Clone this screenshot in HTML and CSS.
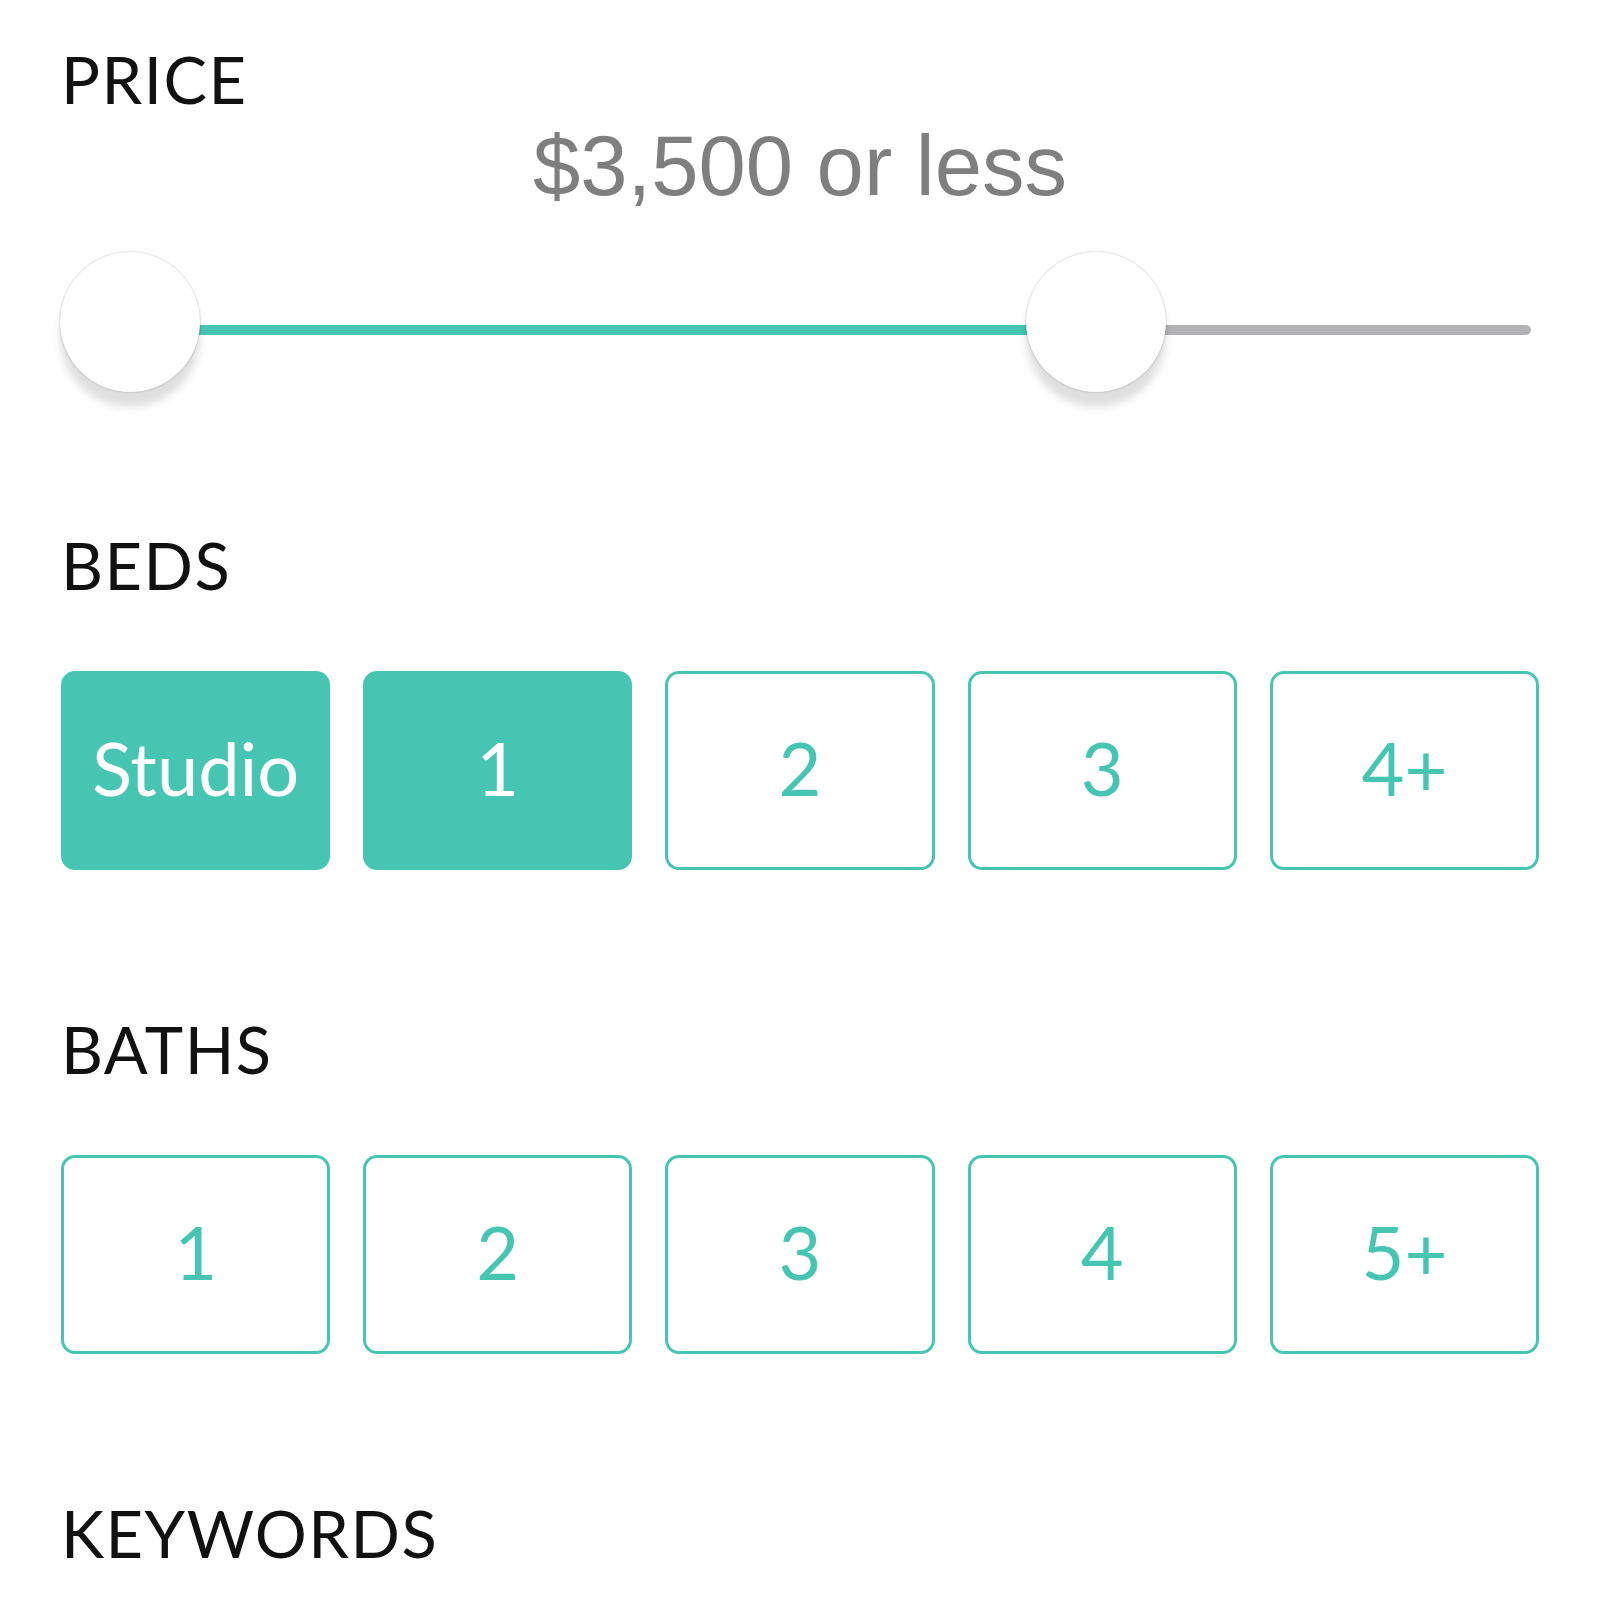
FILE: index.html
```html
<!DOCTYPE html>
<html lang="en">
<head>
  <meta charset="UTF-8" />
  <meta name="viewport" content="width=device-width, initial-scale=1.0" />
  <title>Filters</title>
  <link rel="stylesheet" href="styles.css">
</head>
<body>
  <div class="filters">
    <h2 class="label first">PRICE</h2>
    <div class="price-value">$3,500 or less</div>
    <div class="slider">
      <div class="track">
        <div class="fill"></div>
      </div>
      <div class="thumb min"></div>
      <div class="thumb max"></div>
    </div>

    <h2 class="label">BEDS</h2>
    <div class="options">
      <button class="opt selected">Studio</button>
      <button class="opt selected">1</button>
      <button class="opt">2</button>
      <button class="opt">3</button>
      <button class="opt">4+</button>
    </div>

    <h2 class="label">BATHS</h2>
    <div class="options">
      <button class="opt">1</button>
      <button class="opt">2</button>
      <button class="opt">3</button>
      <button class="opt">4</button>
      <button class="opt">5+</button>
    </div>

    <h2 class="label">KEYWORDS</h2>
  </div>
</body>
</html>
```

FILE: styles.css
```css
body {
  margin: 0;
  background: #ffffff;
  font-family: Lato, "Noto Sans", sans-serif;
}

.filters {
  padding: 0 61px;
}

.label {
  margin: 147px 0 0;
  font-size: 65px;
  font-weight: 400;
  line-height: 1;
  letter-spacing: 1.5px;
  color: #111111;
}
.label.first {
  margin-top: 47px;
}
.slider + .label {
  margin-top: 140px;
}

.price-value {
  margin-top: 11px;
  text-align: center;
  font-family: "Liberation Sans", Arial, sans-serif;
  font-size: 85px;
  line-height: 1;
  color: #7f7f7f;
}

.slider {
  position: relative;
  height: 141px;
  margin-top: 44px;
}
.track {
  position: absolute;
  left: 3px;
  right: 8px;
  top: 73px;
  height: 10px;
  border-radius: 5px;
  background: #b3b3b5;
}
.fill {
  width: 1032px;
  height: 100%;
  border-radius: 5px 0 0 5px;
  background: #47c5b3;
}
.thumb {
  position: absolute;
  top: 0;
  width: 140px;
  height: 140px;
  border-radius: 50%;
  background: #ffffff;
  box-shadow: 0 0 2px rgba(0, 0, 0, 0.3), 0 15px 8px rgba(0, 0, 0, 0.13);
}
.thumb.min {
  left: -1px;
}
.thumb.max {
  left: 965px;
}

.options {
  display: grid;
  grid-template-columns: repeat(5, 1fr);
  gap: 33px;
  margin-top: 73px;
}
.opt {
  height: 199px;
  padding: 0 0 6px;
  border: 3px solid #47c5b3;
  border-radius: 14px;
  background: #ffffff;
  color: #47c5b3;
  font-family: Lato, "Noto Sans", sans-serif;
  font-size: 74px;
  font-weight: 400;
}
.opt.selected {
  background: #47c5b3;
  color: #ffffff;
}
```
